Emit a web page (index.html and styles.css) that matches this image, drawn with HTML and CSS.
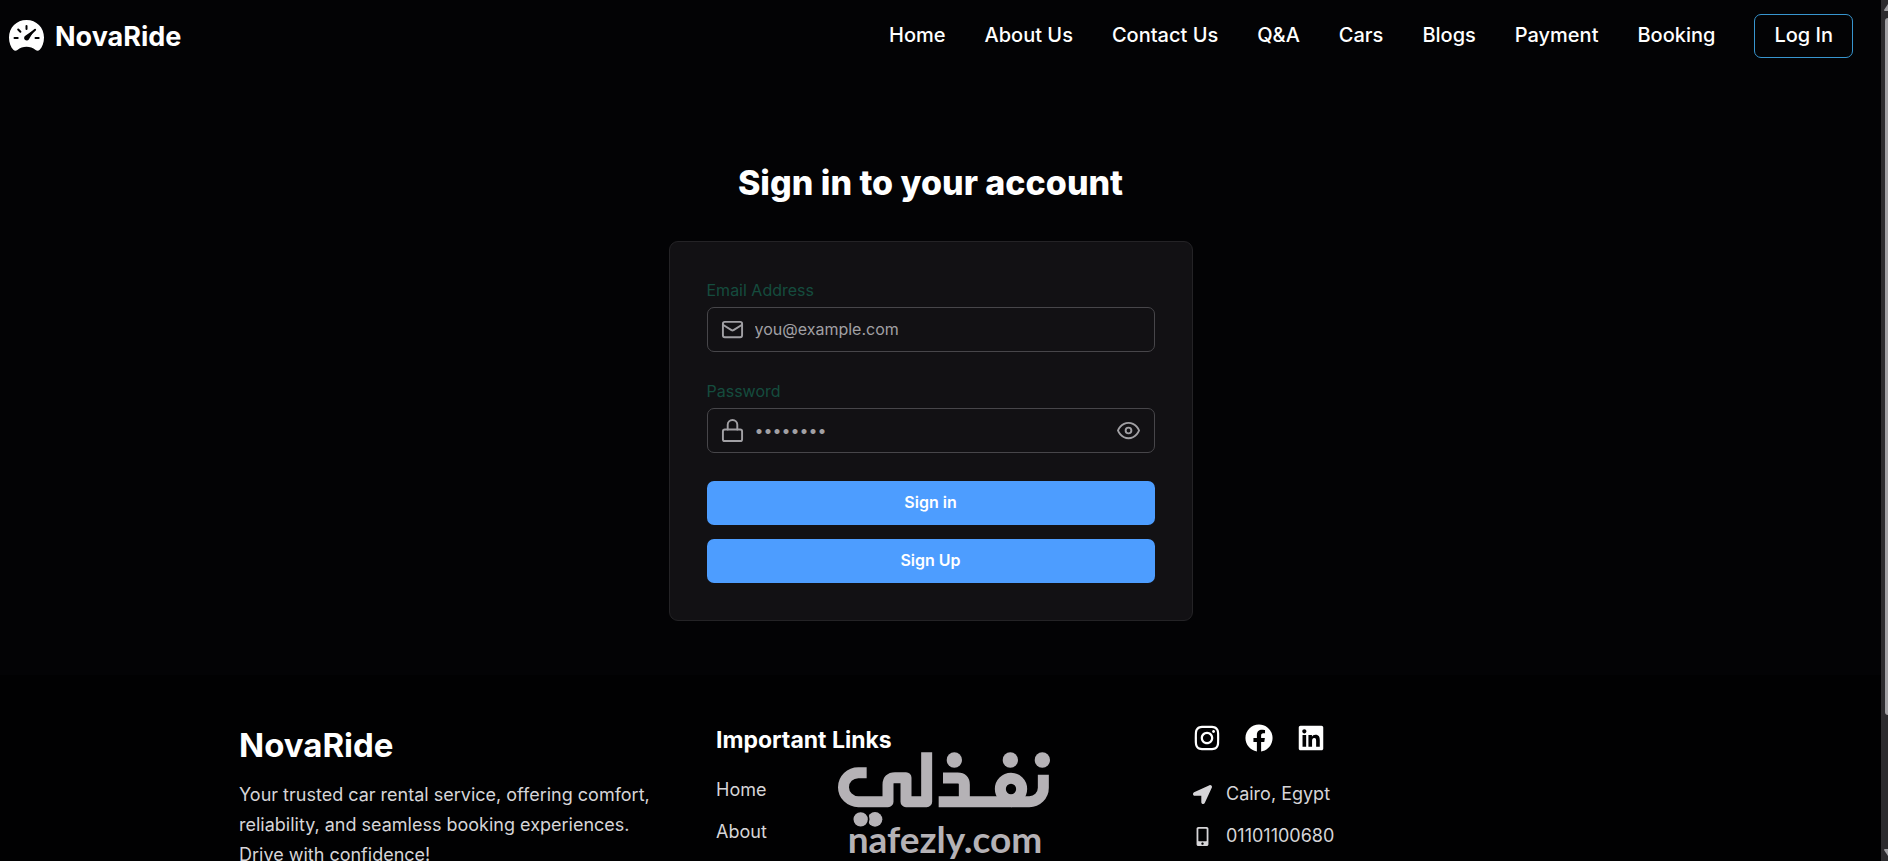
FILE: index.html
```html
<!DOCTYPE html>
<html lang="en">
<head>
    <meta charset="UTF-8">
    <meta name="viewport" content="width=device-width, initial-scale=1.0">
    <link rel="stylesheet" href="styles.css">
    <title>NovaRide</title>
</head>
<body>
    <div class="page">
        <header class="navbar">
            <a class="brand" href="#">
                <svg class="brand-icon" viewBox="0 0 36 32" aria-hidden="true">
                    <path fill="currentColor" d="M18 0C8 0 .5 7.600.5 17.500c0 5 1.700 9.500 4.300 12.300 1.200 1.300 2.700 1.400 4.100.300C11.600 27.900 14.600 26.800 18 26.800s6.400 1.100 9.100 3.300c1.400 1.100 2.900 1 4.100-.3 2.600-2.800 4.300-7.300 4.300-12.300C35.500 7.600 28 0 18 0z"/>
                    <g stroke="#030304" stroke-width="2" stroke-linecap="round">
                        <path d="M18 6v3M9.700 9.500l2.200 2.200M6 18h3.200M27 18h3.200M26.600 9.700 20 16"/>
                    </g>
                    <path fill="#030304" d="M26.500 9 20.600 18.900a2.600 2.600 0 1 1-3.400-3.400z"/>
                </svg>
                <span>NovaRide</span>
            </a>
            <nav class="nav-links">
                <a href="#">Home</a>
                <a href="#">About Us</a>
                <a href="#">Contact Us</a>
                <a href="#">Q&amp;A</a>
                <a href="#">Cars</a>
                <a href="#">Blogs</a>
                <a href="#">Payment</a>
                <a href="#">Booking</a>
                <a class="login" href="#">Log In</a>
            </nav>
        </header>

        <main class="signin">
            <h1>Sign in to your account</h1>
            <form class="card">
                <label for="email">Email Address</label>
                <div class="field">
                    <svg class="field-icon" viewBox="0 0 24 24" aria-hidden="true"><rect x="2" y="4" width="20" height="16" rx="2"/><path d="m22 7-8.970 5.700a1.940 1.940 0 0 1-2.060 0L2 7"/></svg>
                    <input type="email" id="email" placeholder="you@example.com">
                </div>

                <label for="password">Password</label>
                <div class="field">
                    <svg class="field-icon" viewBox="0 0 24 24" aria-hidden="true"><rect x="2" y="11" width="20" height="12" rx="2"/><path d="M7 11V6a5 5 0 0 1 10 0v5"/></svg>
                    <input type="password" id="password" placeholder="••••••••">
                    <button class="toggle" type="button" aria-label="Show password">
                        <svg class="field-icon" viewBox="0 0 24 24" aria-hidden="true"><path d="M1 12s3-8 11-8 11 8 11 8-3 8-11 8-11-8-11-8Z"/><circle cx="12" cy="12" r="3"/></svg>
                    </button>
                </div>

                <button class="btn" type="submit">Sign in</button>
                <button class="btn" type="button">Sign Up</button>
            </form>
        </main>

        <footer class="footer">
            <div class="footer-grid">
                <section>
                    <h2>NovaRide</h2>
                    <p>Your trusted car rental service, offering comfort, reliability, and seamless booking experiences. Drive with confidence!</p>
                </section>
                <section>
                    <h3>Important Links</h3>
                    <ul class="links">
                        <li><a href="#">Home</a></li>
                        <li><a href="#">About</a></li>
                    </ul>
                </section>
                <section>
                    <div class="social">
                        <a href="#" aria-label="Instagram"><svg viewBox="0 0 448 512"><path d="M224.100 141c-63.600 0-114.900 51.300-114.900 114.900s51.300 114.900 114.900 114.900S339 319.500 339 255.900 287.700 141 224.100 141zm0 189.600c-41.100 0-74.700-33.500-74.700-74.700s33.500-74.700 74.700-74.700 74.700 33.500 74.700 74.700-33.600 74.700-74.700 74.700zm146.400-194.300c0 14.900-12 26.800-26.800 26.800-14.900 0-26.800-12-26.800-26.800s12-26.800 26.800-26.800 26.800 12 26.800 26.800zm76.100 27.200c-1.700-35.900-9.900-67.700-36.200-93.900-26.200-26.200-58-34.400-93.900-36.200-37-2.100-147.900-2.100-184.900 0-35.800 1.700-67.600 9.900-93.900 36.100s-34.400 58-36.200 93.900c-2.100 37-2.100 147.900 0 184.900 1.700 35.900 9.900 67.700 36.200 93.900s58 34.400 93.900 36.200c37 2.100 147.900 2.100 184.900 0 35.900-1.700 67.700-9.900 93.900-36.200 26.200-26.200 34.400-58 36.200-93.900 2.100-37 2.100-147.800 0-184.800zM398.800 388c-7.800 19.600-22.900 34.700-42.600 42.600-29.500 11.700-99.500 9-132.100 9s-102.700 2.600-132.100-9c-19.600-7.800-34.700-22.900-42.600-42.600-11.700-29.500-9-99.500-9-132.100s-2.600-102.700 9-132.100c7.800-19.600 22.900-34.700 42.600-42.600 29.500-11.700 99.500-9 132.100-9s102.700-2.600 132.100 9c19.600 7.800 34.700 22.900 42.600 42.600 11.700 29.500 9 99.500 9 132.100s2.700 102.700-9 132.100z"/></svg></a>
                        <a href="#" aria-label="Facebook"><svg viewBox="0 0 512 512"><path d="M504 256C504 119 393 8 256 8S8 119 8 256c0 123.780 90.690 226.380 209.250 245V327.690h-63V256h63v-54.640c0-62.150 37-96.480 93.670-96.480 27.140 0 55.520 4.840 55.520 4.840v61h-31.280c-30.800 0-40.410 19.120-40.410 38.730V256h68.780l-11 71.690h-57.780V501C413.310 482.380 504 379.780 504 256z"/></svg></a>
                        <a href="#" aria-label="LinkedIn"><svg viewBox="0 0 448 512"><path d="M416 32H31.900C14.300 32 0 46.500 0 64.300v383.400C0 465.500 14.300 480 31.900 480H416c17.600 0 32-14.500 32-32.300V64.300c0-17.800-14.400-32.300-32-32.300zM135.400 416H69V202.200h66.500V416zm-33.200-243c-21.300 0-38.500-17.300-38.500-38.500S80.900 96 102.200 96c21.200 0 38.500 17.300 38.500 38.500 0 21.300-17.200 38.500-38.500 38.500zm282.100 243h-66.400V312c0-24.800-.5-56.700-34.500-56.700-34.600 0-39.900 27-39.900 54.900V416h-66.400V202.200h63.700v29.200h.9c8.900-16.800 30.600-34.500 62.900-34.500 67.200 0 79.700 44.300 79.700 101.900V416z"/></svg></a>
                    </div>
                    <ul class="contact">
                        <li><svg viewBox="0 0 512 512" aria-hidden="true"><path d="M444.520 3.520 28.740 195.420c-47.970 22.390-31.980 92.750 19.190 92.750h175.910v175.910c0 51.170 70.360 67.170 92.750 19.190l191.900-415.780c15.990-38.390-25.590-79.970-63.970-63.970z"/></svg>Cairo, Egypt</li>
                        <li><svg viewBox="0 0 320 512" aria-hidden="true"><path d="M272 0H48C21.500 0 0 21.500 0 48v416c0 26.500 21.500 48 48 48h224c26.500 0 48-21.500 48-48V48c0-26.500-21.500-48-48-48zM160 480c-17.700 0-32-14.300-32-32s14.300-32 32-32 32 14.300 32 32-14.300 32-32 32zm112-108c0 6.600-5.400 12-12 12H60c-6.600 0-12-5.400-12-12V60c0-6.600 5.400-12 12-12h200c6.600 0 12 5.400 12 12v312z"/></svg>01101100680</li>
                    </ul>
                </section>
            </div>
        </footer>
    </div>

    <div class="scrollbar" aria-hidden="true">
        <svg class="arrow" viewBox="0 0 7 18"><path d="M7 4 3 10q0 1 1 1h3z"/></svg>
        <div class="thumb"></div>
        <svg class="arrow" viewBox="0 0 7 18"><path d="M7 13 3 7q0-1 1-1h3z"/></svg>
    </div>

    <div class="watermark">
        <svg viewBox="0 0 660 240" role="img" aria-label="Nafezly logo">
            <g fill="none" stroke="#b5b2b6" stroke-width="33" stroke-linejoin="round">
                <path d="M95 74H70a44 43 0 0 0 0 87h89v-51q0-21 21-21h33v72h62V13"/>
                <path d="M324 90h44q20 0 20 20v51M311 161h219"/>
                <circle cx="528" cy="123" r="32"/>
                <path d="M625 80v39a42 42 0 0 1-42 42h-55"/>
            </g>
            <g fill="#b5b2b6">
                <circle cx="358" cy="36" r="23"/>
                <circle cx="526" cy="36" r="23"/>
                <circle cx="622" cy="36" r="23"/>
                <circle cx="120" cy="214" r="22"/>
                <circle cx="77" cy="214" r="24" stroke="#010102" stroke-width="5"/>
            </g>
        </svg>
        <span>nafezly.com</span>
    </div>
</body>
</html>
```

FILE: styles.css
```css
* {
    box-sizing: border-box;
}

body {
    margin: 0;
    height: 100vh;
    display: flex;
    overflow: hidden;
    background-color: #030305;
    color: #fff;
    font-family: Inter, "Liberation Sans", sans-serif;
}

a {
    color: inherit;
    text-decoration: none;
}

h1, h2, h3, p, ul {
    margin: 0;
    padding: 0;
}

ul {
    list-style: none;
}

.page {
    flex: 1;
    height: 100vh;
    overflow: hidden;
}

.navbar {
    display: flex;
    justify-content: space-between;
    align-items: center;
    height: 72px;
    padding: 0 28px 0 8px;
}

.brand {
    display: flex;
    align-items: center;
    gap: 10px;
    font-size: 27px;
    font-weight: 700;
}

.brand-icon {
    width: 37px;
    height: 32px;
}

.nav-links {
    display: flex;
    align-items: center;
    gap: 39px;
    font-size: 20px;
    font-weight: 500;
}

.nav-links a {
    padding-bottom: 2px;
    line-height: 40px;
}

.nav-links .login {
    padding: 0 19px 2px;
    border: 1px solid #3795cf;
    border-radius: 7px;
}

.signin {
    display: flex;
    flex-direction: column;
    align-items: center;
    padding: 89px 20px 54px 0;
}

.signin h1 {
    font-size: 34px;
    line-height: 44px;
    font-weight: 800;
}

.card {
    display: flex;
    flex-direction: column;
    width: 100%;
    max-width: 524px;
    margin-top: 36px;
    padding: 37px;
    background-color: #121114;
    border: 1px solid #242326;
    border-radius: 9px;
}

.card label {
    margin-bottom: 5px;
    font-size: 16px;
    line-height: 23px;
    color: #154c3e;
}

.field {
    display: flex;
    align-items: center;
    height: 45px;
    margin-bottom: 28px;
    padding: 0 14px 0 13px;
    gap: 11px;
    border: 1px solid #47464a;
    border-radius: 7px;
}

.field-icon {
    display: block;
    width: 23px;
    height: 23px;
    fill: none;
    stroke: #a1a0a4;
    stroke-width: 2;
    stroke-linecap: round;
    stroke-linejoin: round;
}

.field input {
    flex: 1;
    min-width: 0;
    padding: 0 0 2px;
    border: none;
    outline: none;
    background: none;
    color: #fff;
    font-family: inherit;
    font-size: 16px;
}

.field input::placeholder {
    color: #a1a0a4;
}

.toggle {
    padding: 0;
    border: none;
    background: none;
    cursor: pointer;
}

.btn {
    height: 44px;
    padding: 0 0 2px;
    border: none;
    border-radius: 7px;
    background-color: #4d9dff;
    color: #fff;
    font-family: inherit;
    font-size: 16px;
    font-weight: 600;
    cursor: pointer;
}

.btn + .btn {
    margin-top: 14px;
}

.footer {
    padding: 47px 20px 47px 0;
    background-color: #010102;
    color: #d6d5d8;
    font-size: 18px;
}

.footer-grid {
    display: grid;
    grid-template-columns: repeat(3, 1fr);
    gap: 48px;
    max-width: 1383px;
    margin: 0 auto;
}

.footer h2 {
    color: #fff;
    font-size: 33px;
    line-height: 46px;
    font-weight: 700;
}

.footer p {
    margin-top: 12px;
    line-height: 30px;
}

.footer h3 {
    color: #fff;
    font-size: 23px;
    line-height: 36px;
    font-weight: 700;
}

.links {
    margin-top: 11px;
}

.links li,
.contact li {
    line-height: 42px;
}

.social {
    display: flex;
    gap: 24px;
    padding-top: 2px;
}

.social svg {
    display: block;
    width: 28px;
    height: 28px;
    fill: #fff;
}

.contact {
    margin-top: 21px;
}

.contact li {
    display: flex;
    align-items: center;
    gap: 14px;
}

.contact svg {
    width: 19px;
    height: 19px;
    fill: #d6d5d8;
}

.scrollbar {
    display: flex;
    flex-direction: column;
    width: 7px;
    background-color: #2c2b2e;
}

.arrow {
    width: 7px;
    height: 18px;
    fill: #a1a0a4;
}

.thumb {
    height: 81vh;
    margin: 0 0 auto 4px;
    border-radius: 6px 0 0 6px;
    background-color: #a1a0a4;
}

/* sits over the footer */
.watermark {
    position: absolute;
    left: 835px;
    bottom: 0;
    width: 220px;
    display: flex;
    flex-direction: column;
    align-items: center;
    padding-bottom: 11px;
    color: #b5b2b6;
    font-family: Lato, sans-serif;
    font-size: 37px;
    font-weight: 700;
    line-height: 22px;
}
```
